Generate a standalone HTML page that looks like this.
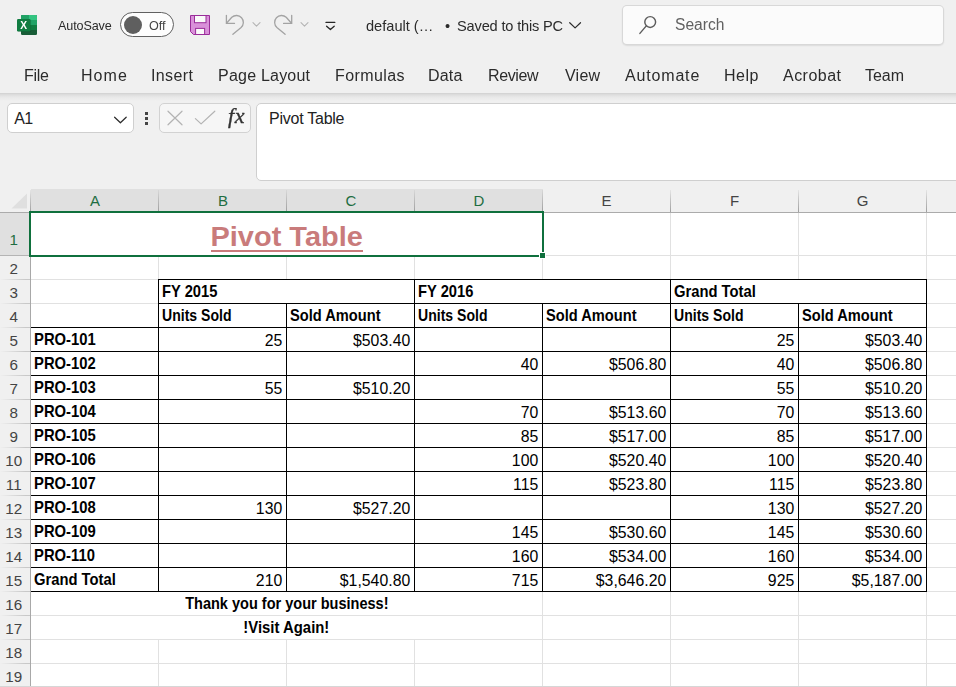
<!DOCTYPE html>
<html lang="en"><head><meta charset="utf-8"><title>default - Excel</title>
<style>
*{box-sizing:border-box;margin:0;padding:0}
html,body{width:956px;height:687px;overflow:hidden}
body{background:#f0f0f0;font-family:"Liberation Sans",sans-serif;color:#242424;position:relative}
.a{position:absolute;white-space:nowrap}
.ui{font-size:16px;line-height:20px;color:#2b2b2b}
.g{will-change:transform}
.tab{top:66px}
/* grid */
.gh{position:absolute;left:31px;width:925px;height:1px;background:#e1e1e1}
.gv{position:absolute;top:212px;width:1px;height:475px;background:#e1e1e1}
.bh{position:absolute;height:1px;background:#000}
.bv{position:absolute;width:1px;background:#000}
.ch{position:absolute;top:189px;height:23px;font-size:15px;line-height:24.5px;text-align:center;color:#444}
.ch.sel{background:#e0e0e0;color:#1e6e42}
.cd{position:absolute;top:190px;width:1px;height:22px;background:linear-gradient(rgba(170,170,170,.15),rgba(165,165,165,.6) 45%,rgba(155,155,155,.95))}
.rh{position:absolute;left:0;width:27.5px;font-size:15.2px;text-align:center;color:#444;height:24px;line-height:25px}
.rl{position:absolute;left:0;width:30px;height:1px;background:linear-gradient(to right,#f0f0f0,#c8c8c8 85%)}
.c{position:absolute;height:24px;line-height:24px;font-size:15.5px;color:#000;white-space:nowrap;overflow:visible}
.n{text-align:right;font-size:15.8px;letter-spacing:.03px;line-height:26px}
.b{font-weight:bold;font-size:15.7px}
.b span{display:inline-block;transform-origin:0 50%}
.b.ctr{text-align:center}
.b.ctr span{transform-origin:50% 50%}
</style></head><body>
<!-- title bar -->
<svg class="a g" style="left:16px;top:14px" width="22" height="22" viewBox="0 0 22 22">
 <rect x="5" y="1" width="16" height="20" rx="1.2" fill="#185c37"/>
 <path d="M6.2 1H13v5H5V2.2A1.2 1.2 0 0 1 6.2 1z" fill="#21a366"/>
 <path d="M13 1h6.8A1.2 1.2 0 0 1 21 2.2V6h-8z" fill="#33c481"/>
 <rect x="5" y="6" width="8" height="5" fill="#107c41"/><rect x="13" y="6" width="8" height="5" fill="#21a366"/>
 <rect x="5" y="11" width="8" height="5" fill="#185c37"/><rect x="13" y="11" width="8" height="5" fill="#107c41"/>
 <rect x="1.6" y="5.6" width="13.5" height="12.5" rx="1.2" fill="#000" opacity=".12"/>
 <rect x="1" y="5" width="13.5" height="12.5" rx="1.2" fill="#107c41"/>
 <text transform="translate(7.75 15.3) scale(.9 1)" font-family="Liberation Sans, sans-serif" font-size="11.4" font-weight="bold" fill="#fff" text-anchor="middle">X</text>
</svg>
<div class="a g" style="left:58px;top:16px;font-size:12.6px;line-height:20px;letter-spacing:-.12px;color:#2b2b2b">AutoSave</div>
<div class="a" style="left:120px;top:12px;width:54px;height:25px;border:1px solid #616161;border-radius:13px;background:#fdfdfd"></div>
<div class="a" style="left:124px;top:16px;width:18px;height:18px;border-radius:9px;background:#5f5f5f"></div>
<div class="a g" style="left:148.5px;top:16px;font-size:12.6px;line-height:20px;color:#444">Off</div>
<svg class="a" style="left:189px;top:14px" width="22" height="22" viewBox="0 0 22 22">
 <path d="M1.5 1.5h19v19H4.5l-3-3z" fill="#d990d9" stroke="#9a2d9a" stroke-width="1"/>
 <rect x="5.5" y="1.5" width="11.5" height="7.2" fill="#fafafa" stroke="#9a2d9a" stroke-width="1"/>
 <rect x="6.6" y="14.4" width="9" height="6.1" fill="#fafafa" stroke="#9a2d9a" stroke-width="1"/>
</svg>
<svg class="a" style="left:220px;top:10px" width="125" height="30" viewBox="220 10 125 30" fill="none" stroke-linecap="round" stroke-linejoin="round">
 <g stroke="#a3a3a3" stroke-width="1.3">
  <path d="M226.4 15.3v8.1h8.1"/>
  <path d="M226.5 23.3L231.8 17.3A6.9 6.9 0 1 1 241.1 27.5L232.9 34.3"/>
  <path d="M291.7 15.3v8.1h-8.1"/>
  <path d="M291.5 23.3L286.2 17.3A6.9 6.9 0 1 0 276.9 27.5L285.1 34.3"/>
 </g>
 <g stroke="#b4b4b4" stroke-width="1.1">
  <path d="M253 22.7l3.5 3.5 3.5-3.5"/>
  <path d="M301 22.7l3.5 3.5 3.5-3.5"/>
 </g>
 <g stroke="#262626" stroke-width="1.3">
  <path d="M326 22.4h8.8"/>
  <path d="M326.6 26.2l3.8 3.4 3.8-3.4"/>
 </g>
</svg>
<div class="a g" style="left:366.3px;top:16px;font-size:14.6px;line-height:20px;color:#2b2b2b">default (…</div>
<div class="a g" style="left:445.3px;top:16px;font-size:14.6px;line-height:20px;color:#2b2b2b">•</div>
<div class="a g" style="left:457px;top:16px;font-size:14.6px;line-height:20px;color:#2b2b2b;letter-spacing:-.17px">Saved to this PC</div>
<svg class="a" style="left:567px;top:18px" width="16" height="14" viewBox="567 18 16 14" fill="none" stroke="#2b2b2b" stroke-width="1.2" stroke-linecap="round" stroke-linejoin="round"><path d="M569.7 22.7l5.4 5.2 5.4-5.2"/></svg>
<div class="a" style="left:623px;top:6px;width:319.5px;height:38px;background:#fbfbfb;border-radius:4px;box-shadow:0 0 0 1px #d8d8d8,0 1px 1.5px 1px rgba(0,0,0,.09)"></div>
<svg class="a" style="left:636px;top:14px" width="24" height="24" viewBox="636 14 24 24" fill="none" stroke="#5c5c5c" stroke-width="1.45" stroke-linecap="round"><circle cx="650.2" cy="22" r="5.4"/><path d="M646.3 25.9L639.9 33.4"/></svg>
<div class="a g" style="left:674.5px;top:14.5px;font-size:15.6px;line-height:20px;color:#616161">Search</div>
<!-- ribbon tabs -->
<div class="a ui tab g" style="left:23.6px;letter-spacing:-0.30px">File</div>
<div class="a ui tab g" style="left:80.8px;letter-spacing:1.07px">Home</div>
<div class="a ui tab g" style="left:150.6px;letter-spacing:0.38px">Insert</div>
<div class="a ui tab g" style="left:217.7px;letter-spacing:0.22px">Page Layout</div>
<div class="a ui tab g" style="left:334.5px;letter-spacing:0.41px">Formulas</div>
<div class="a ui tab g" style="left:427.7px;letter-spacing:0.17px">Data</div>
<div class="a ui tab g" style="left:488.0px;letter-spacing:-0.40px">Review</div>
<div class="a ui tab g" style="left:564.6px;letter-spacing:0.23px">View</div>
<div class="a ui tab g" style="left:624.9px;letter-spacing:0.83px">Automate</div>
<div class="a ui tab g" style="left:723.8px;letter-spacing:0.53px">Help</div>
<div class="a ui tab g" style="left:782.8px;letter-spacing:0.47px">Acrobat</div>
<div class="a ui tab g" style="left:865.4px;letter-spacing:-0.03px">Team</div>
<div class="a" style="left:0;top:93px;width:956px;height:8px;background:linear-gradient(#d0d0d0,#dedede 22%,#e9e9e9 55%,#f0f0f0)"></div>
<!-- formula bar -->
<div class="a" style="left:7px;top:103px;width:127px;height:30px;border:1px solid #cfcfcf;border-radius:5px;background:#fff"></div>
<div class="a" style="left:14.3px;top:109px;font-size:16px;line-height:20px;color:#222;letter-spacing:-.6px">A1</div>
<svg class="a" style="left:112px;top:113px" width="18" height="14" viewBox="112 113 18 14" fill="none" stroke="#2b2b2b" stroke-width="1.2" stroke-linecap="round" stroke-linejoin="round"><path d="M114.6 117.2l5.8 5.6 5.8-5.6"/></svg>
<div class="a" style="left:145px;top:112px;width:3px;height:3px;background:#444"></div>
<div class="a" style="left:145px;top:117px;width:3px;height:3px;background:#444"></div>
<div class="a" style="left:145px;top:122px;width:3px;height:3px;background:#444"></div>
<div class="a" style="left:159px;top:103px;width:92px;height:30px;border:1px solid #d2d2d2;border-radius:5px;background:#f6f6f6"></div>
<svg class="a" style="left:160px;top:104px" width="90" height="28" viewBox="160 104 90 28" fill="none" stroke-linecap="round" stroke-linejoin="round">
 <path d="M168 111.2l14 13.6M182 111.2l-14 13.6" stroke="#b3b3b3" stroke-width="1.2"/>
 <path d="M195.4 118.6l5.7 5.3L214.8 111.2" stroke="#b3b3b3" stroke-width="1.2"/>
</svg>
<div class="a g" style="left:228.2px;top:104px;font-family:'Liberation Serif',serif;font-style:italic;font-size:22px;line-height:24px;color:#333;letter-spacing:.6px;-webkit-text-stroke:.35px #333">fx</div>
<div class="a" style="left:256px;top:103px;width:710px;height:78px;border:1px solid #cfcfcf;border-radius:5px;background:#fff"></div>
<div class="a" style="left:269px;top:109px;font-size:16px;line-height:20px;color:#222;letter-spacing:-.25px">Pivot Table</div>
<!-- worksheet -->
<div class="a" style="left:31px;top:212px;width:925px;height:475px;background:#fff"></div>
<svg class="a" style="left:0;top:189px" width="30" height="22" viewBox="0 0 30 22"><path d="M27 4.5V19.6H11.5z" fill="#dfdfdf"/></svg>
<div class="ch sel" style="left:31px;width:128px">A</div>
<div class="ch sel" style="left:159px;width:128px">B</div>
<div class="ch sel" style="left:287px;width:128px">C</div>
<div class="ch sel" style="left:415px;width:128px">D</div>
<div class="ch" style="left:543px;width:127px">E</div>
<div class="ch" style="left:671px;width:127px">F</div>
<div class="ch" style="left:799px;width:127px">G</div>
<div class="a" style="left:0;top:212px;width:956px;height:1px;background:#ababab"></div>
<div class="cd" style="left:30px"></div>
<div class="cd" style="left:158px"></div>
<div class="cd" style="left:286px"></div>
<div class="cd" style="left:414px"></div>
<div class="cd" style="left:542px"></div>
<div class="cd" style="left:670px"></div>
<div class="cd" style="left:798px"></div>
<div class="cd" style="left:926px"></div>
<div class="a" style="left:0;top:213px;width:29px;height:43px;background:#e0e0e0;border-bottom:1px solid #b4b4b4"></div>
<div class="rh" style="top:227px;color:#1e6e42">1</div>
<div class="rh" style="top:256px">2</div>
<div class="rl" style="top:279px"></div>
<div class="rh" style="top:280px">3</div>
<div class="rl" style="top:303px"></div>
<div class="rh" style="top:304px">4</div>
<div class="rl" style="top:327px"></div>
<div class="rh" style="top:328px">5</div>
<div class="rl" style="top:351px"></div>
<div class="rh" style="top:352px">6</div>
<div class="rl" style="top:375px"></div>
<div class="rh" style="top:376px">7</div>
<div class="rl" style="top:399px"></div>
<div class="rh" style="top:400px">8</div>
<div class="rl" style="top:423px"></div>
<div class="rh" style="top:424px">9</div>
<div class="rl" style="top:447px"></div>
<div class="rh" style="top:448px">10</div>
<div class="rl" style="top:471px"></div>
<div class="rh" style="top:472px">11</div>
<div class="rl" style="top:495px"></div>
<div class="rh" style="top:496px">12</div>
<div class="rl" style="top:519px"></div>
<div class="rh" style="top:520px">13</div>
<div class="rl" style="top:543px"></div>
<div class="rh" style="top:544px">14</div>
<div class="rl" style="top:567px"></div>
<div class="rh" style="top:568px">15</div>
<div class="rl" style="top:591px"></div>
<div class="rh" style="top:592px">16</div>
<div class="rl" style="top:615px"></div>
<div class="rh" style="top:616px">17</div>
<div class="rl" style="top:639px"></div>
<div class="rh" style="top:640px">18</div>
<div class="rl" style="top:663px"></div>
<div class="rh" style="top:664px">19</div>
<div class="a" style="left:30px;top:212px;width:1px;height:475px;background:#a8a8a8"></div>
<div class="gh" style="top:255px"></div>
<div class="gh" style="top:279px"></div>
<div class="gh" style="top:303px"></div>
<div class="gh" style="top:327px"></div>
<div class="gh" style="top:351px"></div>
<div class="gh" style="top:375px"></div>
<div class="gh" style="top:399px"></div>
<div class="gh" style="top:423px"></div>
<div class="gh" style="top:447px"></div>
<div class="gh" style="top:471px"></div>
<div class="gh" style="top:495px"></div>
<div class="gh" style="top:519px"></div>
<div class="gh" style="top:543px"></div>
<div class="gh" style="top:567px"></div>
<div class="gh" style="top:591px"></div>
<div class="gh" style="top:615px"></div>
<div class="gh" style="top:639px"></div>
<div class="gh" style="top:663px"></div>
<div class="gv" style="left:158px;top:256px;height:336px"></div>
<div class="gv" style="left:158px;top:640px;height:47px"></div>
<div class="gv" style="left:286px;top:256px;height:24px"></div>
<div class="gv" style="left:286px;top:303px;height:289px"></div>
<div class="gv" style="left:286px;top:640px;height:47px"></div>
<div class="gv" style="left:414px;top:256px;height:336px"></div>
<div class="gv" style="left:414px;top:640px;height:47px"></div>
<div class="gv" style="left:542px;top:213px;height:67px"></div>
<div class="gv" style="left:542px;top:303px;height:384px"></div>
<div class="gv" style="left:670px;top:213px;height:474px"></div>
<div class="gv" style="left:798px;top:213px;height:67px"></div>
<div class="gv" style="left:798px;top:303px;height:384px"></div>
<div class="gv" style="left:926px;top:213px;height:474px"></div>
<div class="bh" style="left:158px;top:279px;width:769px"></div>
<div class="bh" style="left:158px;top:303px;width:769px"></div>
<div class="bh" style="left:31px;top:327px;width:896px"></div>
<div class="bh" style="left:31px;top:351px;width:896px"></div>
<div class="bh" style="left:31px;top:375px;width:896px"></div>
<div class="bh" style="left:31px;top:399px;width:896px"></div>
<div class="bh" style="left:31px;top:423px;width:896px"></div>
<div class="bh" style="left:31px;top:447px;width:896px"></div>
<div class="bh" style="left:31px;top:471px;width:896px"></div>
<div class="bh" style="left:31px;top:495px;width:896px"></div>
<div class="bh" style="left:31px;top:519px;width:896px"></div>
<div class="bh" style="left:31px;top:543px;width:896px"></div>
<div class="bh" style="left:31px;top:567px;width:896px"></div>
<div class="bh" style="left:31px;top:591px;width:896px"></div>
<div class="bv" style="left:158px;top:279px;height:313px"></div>
<div class="bv" style="left:414px;top:279px;height:313px"></div>
<div class="bv" style="left:670px;top:279px;height:313px"></div>
<div class="bv" style="left:926px;top:279px;height:313px"></div>
<div class="bv" style="left:286px;top:303px;height:289px"></div>
<div class="bv" style="left:542px;top:303px;height:289px"></div>
<div class="bv" style="left:798px;top:303px;height:289px"></div>
<div class="a" style="left:0;top:686px;width:956px;height:1px;background:#d6d6d6"></div>
<div class="c b" style="left:162.4px;top:280px"><span style="transform:scaleX(0.938)">FY 2015</span></div>
<div class="c b" style="left:418.4px;top:280px"><span style="transform:scaleX(0.938)">FY 2016</span></div>
<div class="c b" style="left:674.4px;top:280px"><span style="transform:scaleX(0.9419)">Grand Total</span></div>
<div class="c b" style="left:162.4px;top:304px"><span style="transform:scaleX(0.8956)">Units Sold</span></div>
<div class="c b" style="left:418.4px;top:304px"><span style="transform:scaleX(0.8956)">Units Sold</span></div>
<div class="c b" style="left:674.4px;top:304px"><span style="transform:scaleX(0.8956)">Units Sold</span></div>
<div class="c b" style="left:290.4px;top:304px"><span style="transform:scaleX(0.9332)">Sold Amount</span></div>
<div class="c b" style="left:546.4px;top:304px"><span style="transform:scaleX(0.9332)">Sold Amount</span></div>
<div class="c b" style="left:802.4px;top:304px"><span style="transform:scaleX(0.9332)">Sold Amount</span></div>
<div class="c b" style="left:34.4px;top:328px"><span style="transform:scaleX(0.9438)">PRO-101</span></div>
<div class="c n" style="left:159px;top:328px;width:123.3px">25</div>
<div class="c n" style="left:287px;top:328px;width:123.3px">$503.40</div>
<div class="c n" style="left:671px;top:328px;width:123.3px">25</div>
<div class="c n" style="left:799px;top:328px;width:123.3px">$503.40</div>
<div class="c b" style="left:34.4px;top:352px"><span style="transform:scaleX(0.9438)">PRO-102</span></div>
<div class="c n" style="left:415px;top:352px;width:123.3px">40</div>
<div class="c n" style="left:543px;top:352px;width:123.3px">$506.80</div>
<div class="c n" style="left:671px;top:352px;width:123.3px">40</div>
<div class="c n" style="left:799px;top:352px;width:123.3px">$506.80</div>
<div class="c b" style="left:34.4px;top:376px"><span style="transform:scaleX(0.9438)">PRO-103</span></div>
<div class="c n" style="left:159px;top:376px;width:123.3px">55</div>
<div class="c n" style="left:287px;top:376px;width:123.3px">$510.20</div>
<div class="c n" style="left:671px;top:376px;width:123.3px">55</div>
<div class="c n" style="left:799px;top:376px;width:123.3px">$510.20</div>
<div class="c b" style="left:34.4px;top:400px"><span style="transform:scaleX(0.9438)">PRO-104</span></div>
<div class="c n" style="left:415px;top:400px;width:123.3px">70</div>
<div class="c n" style="left:543px;top:400px;width:123.3px">$513.60</div>
<div class="c n" style="left:671px;top:400px;width:123.3px">70</div>
<div class="c n" style="left:799px;top:400px;width:123.3px">$513.60</div>
<div class="c b" style="left:34.4px;top:424px"><span style="transform:scaleX(0.9438)">PRO-105</span></div>
<div class="c n" style="left:415px;top:424px;width:123.3px">85</div>
<div class="c n" style="left:543px;top:424px;width:123.3px">$517.00</div>
<div class="c n" style="left:671px;top:424px;width:123.3px">85</div>
<div class="c n" style="left:799px;top:424px;width:123.3px">$517.00</div>
<div class="c b" style="left:34.4px;top:448px"><span style="transform:scaleX(0.9438)">PRO-106</span></div>
<div class="c n" style="left:415px;top:448px;width:123.3px">100</div>
<div class="c n" style="left:543px;top:448px;width:123.3px">$520.40</div>
<div class="c n" style="left:671px;top:448px;width:123.3px">100</div>
<div class="c n" style="left:799px;top:448px;width:123.3px">$520.40</div>
<div class="c b" style="left:34.4px;top:472px"><span style="transform:scaleX(0.9438)">PRO-107</span></div>
<div class="c n" style="left:415px;top:472px;width:123.3px">115</div>
<div class="c n" style="left:543px;top:472px;width:123.3px">$523.80</div>
<div class="c n" style="left:671px;top:472px;width:123.3px">115</div>
<div class="c n" style="left:799px;top:472px;width:123.3px">$523.80</div>
<div class="c b" style="left:34.4px;top:496px"><span style="transform:scaleX(0.9438)">PRO-108</span></div>
<div class="c n" style="left:159px;top:496px;width:123.3px">130</div>
<div class="c n" style="left:287px;top:496px;width:123.3px">$527.20</div>
<div class="c n" style="left:671px;top:496px;width:123.3px">130</div>
<div class="c n" style="left:799px;top:496px;width:123.3px">$527.20</div>
<div class="c b" style="left:34.4px;top:520px"><span style="transform:scaleX(0.9438)">PRO-109</span></div>
<div class="c n" style="left:415px;top:520px;width:123.3px">145</div>
<div class="c n" style="left:543px;top:520px;width:123.3px">$530.60</div>
<div class="c n" style="left:671px;top:520px;width:123.3px">145</div>
<div class="c n" style="left:799px;top:520px;width:123.3px">$530.60</div>
<div class="c b" style="left:34.4px;top:544px"><span style="transform:scaleX(0.9438)">PRO-110</span></div>
<div class="c n" style="left:415px;top:544px;width:123.3px">160</div>
<div class="c n" style="left:543px;top:544px;width:123.3px">$534.00</div>
<div class="c n" style="left:671px;top:544px;width:123.3px">160</div>
<div class="c n" style="left:799px;top:544px;width:123.3px">$534.00</div>
<div class="c b" style="left:34.4px;top:568px"><span style="transform:scaleX(0.9419)">Grand Total</span></div>
<div class="c n" style="left:159px;top:568px;width:123.3px">210</div>
<div class="c n" style="left:287px;top:568px;width:123.3px">$1,540.80</div>
<div class="c n" style="left:415px;top:568px;width:123.3px">715</div>
<div class="c n" style="left:543px;top:568px;width:123.3px">$3,646.20</div>
<div class="c n" style="left:671px;top:568px;width:123.3px">925</div>
<div class="c n" style="left:799px;top:568px;width:123.3px">$5,187.00</div>
<div class="c b ctr" style="left:31px;top:592px;width:511px"><span style="transform:scaleX(0.9255)">Thank you for your business!</span></div>
<div class="c b ctr" style="left:31px;top:616px;width:511px"><span style="transform:scaleX(0.9486)">!Visit Again!</span></div>
<div class="a" style="left:31px;top:213px;width:511px;height:42px;text-align:center;font-weight:bold;font-size:28.4px;line-height:46px;color:#c97b7b"><span id="ttl" style="display:inline-block;transform:scaleX(1.02);text-decoration:none;position:relative">Pivot Table</span></div>
<div class="a" style="left:211px;top:250px;width:152px;height:2px;background:#c97b7b"></div>
<div class="a" style="left:29px;top:211px;width:515px;height:46px;border:2px solid #0f703d"></div>
<div class="a" style="left:539px;top:252px;width:7px;height:7px;background:#fff"></div>
<div class="a" style="left:540px;top:253px;width:5px;height:5px;background:#0f703d"></div>
<div class="a" style="left:31px;top:211px;width:512px;height:2px;background:#0f703d"></div>
</body></html>
